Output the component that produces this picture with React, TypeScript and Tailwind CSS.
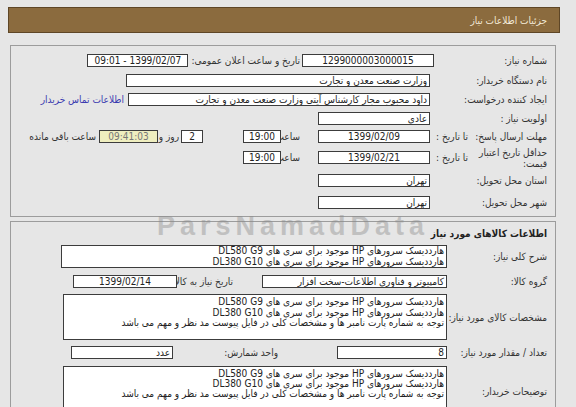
import React from "react";

const Box = ({ w, children, center, className = "" }: { w: string; children?: React.ReactNode; center?: boolean; className?: string }) => (
  <div
    className={`${w} shrink-0 h-[13px] border border-[#3c3c3c] bg-white px-[2px] text-[10px] leading-[11px] whitespace-nowrap overflow-hidden ${center ? "text-center" : "text-right"} ${className}`}
  >
    {children}
  </div>
);

const Label = ({ w, children, className = "" }: { w: string; children: React.ReactNode; className?: string }) => (
  <div className={`${w} shrink-0 text-[10px] leading-[13px] text-[#333] whitespace-nowrap ${className}`}>{children}</div>
);

const L1 = "هارددیسک سرورهای HP موجود برای سری های DL580 G9";
const L2 = "هارددیسک سرورهای HP موجود برای سری های DL380 G10";
const L3 = "توجه به شماره پارت نامبر ها و مشخصات کلی در فایل پیوست مد نظر و مهم می باشد";

export default function App() {
  return (
    <div
      dir="rtl"
      className="relative w-[576px] h-[407px] overflow-hidden bg-[#e6e6e6] text-[#222]"
      style={{ fontFamily: '"DejaVu Sans Condensed", "DejaVu Sans", sans-serif' }}
    >
      <div className="pt-[7px] ps-[16px] pe-[8px]">
        <div className="h-[26px] border border-[#5e4626] bg-[#8b6b3e] flex items-center ps-[12px] text-[10px] text-[#f3ead8]">
          جزئیات اطلاعات نیاز
        </div>
      </div>

      {/* Panel 1 */}
      <div className="mt-[12px] ms-[20px] me-[10px] border border-[#9c9c9c] pt-[8px] pb-[7px] ps-[8px]">
        <div className="flex items-center h-[13px]">
          <Label w="w-[113px]">شماره نیاز:</Label>
          <Box w="w-[132px]" center>1299000003000015</Box>
          <Label w="w-auto" className="ps-[2px] pe-[3px]">تاریخ و ساعت اعلان عمومی:</Label>
          <Box w="w-[101px]" center>1399/02/07 - 09:01</Box>
        </div>
        <div className="flex items-center h-[13px] mt-[7px]">
          <Label w="w-[117px]">نام دستگاه خریدار:</Label>
          <Box w="w-[304px]">وزارت صنعت معدن و تجارت</Box>
        </div>
        <div className="flex items-center h-[13px] mt-[6px]">
          <Label w="w-[117px]">ایجاد کننده درخواست:</Label>
          <Box w="w-[302px]">داود محبوب مجار کارشناس آیتی وزارت صنعت معدن و تجارت</Box>
          <div className="ps-[4px] text-[10px] leading-[13px] text-[#3b3bb0] whitespace-nowrap">اطلاعات تماس خریدار</div>
        </div>
        <div className="flex items-center h-[13px] mt-[6px]">
          <Label w="w-[117px]">اولویت نیاز :</Label>
          <Box w="w-[112px]">عادی</Box>
        </div>
        <div className="flex items-center h-[13px] mt-[5px]">
          <Label w="w-[77px]">مهلت ارسال پاسخ:</Label>
          <Label w="w-[40px]" className="ps-[2px]">تا تاریخ :</Label>
          <Box w="w-[112px]" center>1399/02/09</Box>
          <Label w="w-[37px]" className="ps-[18px]">ساعت</Label>
          <Box w="w-[38px]" center>19:00</Box>
          <div className="w-[40px] shrink-0" />
          <Box w="w-[22px]" center>2</Box>
          <Label w="w-[23px]" className="ps-[2px]">روز و</Label>
          <Box w="w-[59px]" center className="!bg-[#efeebf] !text-[#777]">09:41:03</Box>
          <Label w="w-[72px]" className="ps-[3px]">ساعت باقی مانده</Label>
        </div>
        <div className="flex items-center h-[13px] mt-[8px]">
          <Label w="w-[77px]" className="!whitespace-normal !leading-[11px]">حداقل تاریخ اعتبار قیمت:</Label>
          <Label w="w-[40px]" className="ps-[2px]">تا تاریخ :</Label>
          <Box w="w-[112px]" center>1399/02/21</Box>
          <Label w="w-[37px]" className="ps-[18px]">ساعت</Label>
          <Box w="w-[38px]" center>19:00</Box>
        </div>
        <div className="flex items-center h-[13px] mt-[10px]">
          <Label w="w-[117px]">استان محل تحویل:</Label>
          <Box w="w-[112px]">تهران</Box>
        </div>
        <div className="flex items-center h-[13px] mt-[9px]">
          <Label w="w-[117px]">شهر محل تحویل:</Label>
          <Box w="w-[112px]">تهران</Box>
        </div>
      </div>

      {/* Panel 2 */}
      <div className="mt-[4px] ms-[20px] me-[10px] border border-[#9c9c9c] pt-[5px] ps-[8px] h-[300px]">
        <div className="h-[13px] text-[10px] leading-[13px] font-bold text-[#222]">اطلاعات کالاهای مورد نیاز</div>
        <div className="flex items-center mt-[5px]">
          <Label w="w-[100px]">شرح کلی نیاز:</Label>
          <div className="w-[386px] shrink-0 h-[23px] border border-[#3c3c3c] bg-white px-[2px] text-[10px] leading-[10.5px] whitespace-nowrap overflow-hidden">
            <div>{L1}</div>
            <div>{L2}</div>
          </div>
        </div>
        <div className="flex items-center h-[13px] mt-[7px]">
          <Label w="w-[100px]">گروه کالا:</Label>
          <Box w="w-[185px]">کامپیوتر و فناوری اطلاعات-سخت افزار</Box>
          <Label w="w-[85px]" className="ps-[29px]">تاریخ نیاز به کالا:</Label>
          <Box w="w-[104px]" center>1399/02/14</Box>
        </div>
        <div className="flex items-center mt-[6px]">
          <Label w="w-[100px]">مشخصات کالای مورد نیاز:</Label>
          <div className="w-[384px] shrink-0 h-[46px] border border-[#3c3c3c] bg-white px-[2px] pt-[2px] text-[10px] leading-[10.5px] whitespace-nowrap overflow-hidden">
            <div>{L1}</div>
            <div>{L2}</div>
            <div>{L3}</div>
          </div>
        </div>
        <div className="flex items-center h-[13px] mt-[6px]">
          <Label w="w-[100px]">تعداد / مقدار مورد نیاز:</Label>
          <Box w="w-[110px]">8</Box>
          <Label w="w-[164px]" className="ps-[59px]">واحد شمارش:</Label>
          <Box w="w-[102px]">عدد</Box>
        </div>
        <div className="flex items-center mt-[7px]">
          <Label w="w-[100px]">توضیحات خریدار:</Label>
          <div className="w-[384px] shrink-0 h-[50px] border border-[#3c3c3c] bg-white px-[2px] pt-[2px] text-[10px] leading-[10px] whitespace-nowrap overflow-hidden">
            <div>{L1}</div>
            <div>{L2}</div>
            <div>{L3}</div>
          </div>
        </div>
      </div>

      <div
        dir="ltr"
        className="pointer-events-none absolute left-[157px] top-[211px] text-[27px] font-bold tracking-[5px] text-[#8a8a8a] opacity-40 leading-[30px]"
        style={{ fontFamily: '"Liberation Sans", sans-serif' }}
      >
        ParsNamadData
      </div>
    </div>
  );
}
